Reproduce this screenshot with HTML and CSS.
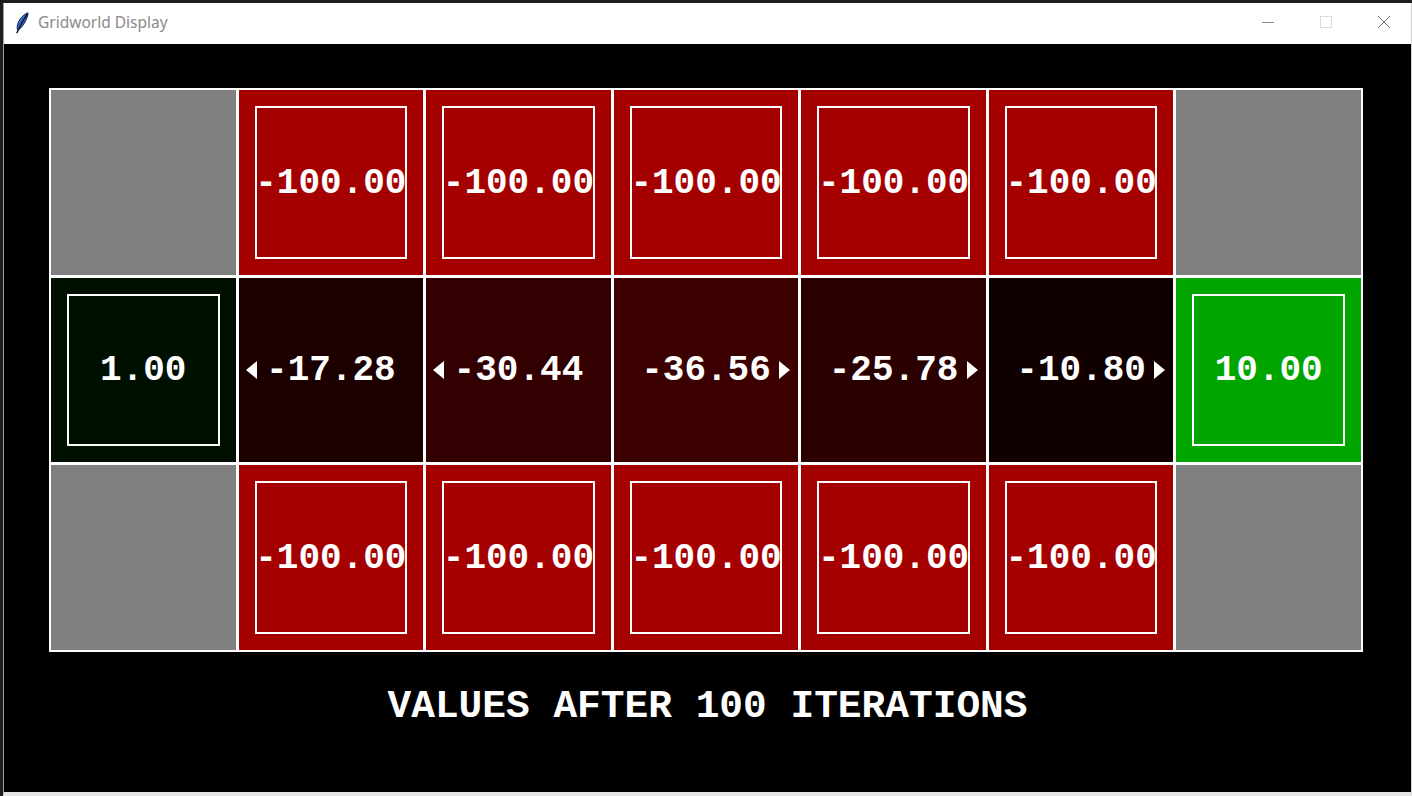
FILE: index.html
```html
<!DOCTYPE html>
<html>
<head>
<meta charset="utf-8">
<link rel="stylesheet" href="styles.css">
</head>
<body>
<div class="window">
  <div class="titlebar">
    <svg class="app-icon" width="16" height="22" viewBox="0 0 16 22">
      <path d="M14 0.8 C9 2.5 4.3 8 3.3 14 C3 16 3.2 17.6 3.9 18.3 C6.5 17 9.5 13 11.5 9 C13 6 14 3.5 14 0.8 Z" fill="#3a6fd0" stroke="#102250" stroke-width="1"/>
      <path d="M13 2.5 C9.5 8 6.2 13 3 20.8" fill="none" stroke="#0a1330" stroke-width="1.4" stroke-linecap="round"/>
    </svg>
    <span class="title">Gridworld Display</span>
    <div class="controls">
      <svg class="ctl" width="46" height="30" viewBox="0 0 46 30"><line x1="17" y1="15.5" x2="29" y2="15.5" stroke="#8a8a8a" stroke-width="1"/></svg>
      <svg class="ctl" width="46" height="30" viewBox="0 0 46 30"><rect x="17.5" y="9.5" width="11" height="11" fill="none" stroke="#dcdcdc" stroke-width="1"/></svg>
      <svg class="ctl" width="46" height="30" viewBox="0 0 46 30"><path d="M17 9 L29 21 M29 9 L17 21" stroke="#7a7a7a" stroke-width="1"/></svg>
    </div>
  </div>
  <div class="canvas">
    <div class="grid">
      <div class="cell wall"></div>
      <div class="cell term pit"><div class="box"><span class="val">-100.00</span></div></div>
      <div class="cell term pit"><div class="box"><span class="val">-100.00</span></div></div>
      <div class="cell term pit"><div class="box"><span class="val">-100.00</span></div></div>
      <div class="cell term pit"><div class="box"><span class="val">-100.00</span></div></div>
      <div class="cell term pit"><div class="box"><span class="val">-100.00</span></div></div>
      <div class="cell wall"></div>

      <div class="cell term small"><div class="box"><span class="val">1.00</span></div></div>
      <div class="cell plain c1"><span class="arrow left"></span><span class="val">-17.28</span></div>
      <div class="cell plain c2"><span class="arrow left"></span><span class="val">-30.44</span></div>
      <div class="cell plain c3"><span class="val">-36.56</span><span class="arrow right"></span></div>
      <div class="cell plain c4"><span class="val">-25.78</span><span class="arrow right"></span></div>
      <div class="cell plain c5"><span class="val">-10.80</span><span class="arrow right"></span></div>
      <div class="cell term big"><div class="box"><span class="val">10.00</span></div></div>

      <div class="cell wall"></div>
      <div class="cell term pit"><div class="box"><span class="val">-100.00</span></div></div>
      <div class="cell term pit"><div class="box"><span class="val">-100.00</span></div></div>
      <div class="cell term pit"><div class="box"><span class="val">-100.00</span></div></div>
      <div class="cell term pit"><div class="box"><span class="val">-100.00</span></div></div>
      <div class="cell term pit"><div class="box"><span class="val">-100.00</span></div></div>
      <div class="cell wall"></div>
    </div>
    <div class="caption">VALUES AFTER 100 ITERATIONS</div>
  </div>
</div>
</body>
</html>
```

FILE: styles.css
```css
html, body {
  margin: 0;
  padding: 0;
  width: 1412px;
  height: 796px;
  overflow: hidden;
  background: #1e1e1e;
}
.window {
  margin: 3px 0 0 3px;
  width: 1409px;
  height: 793px;
  background: #ffffff;
  display: flex;
  flex-direction: column;
  box-sizing: border-box;
  border-left: 1px solid #a0a0a0;
  border-right: 1px solid #d0d0d0;
  border-bottom: 4px solid #e6e6e6;
}
.titlebar {
  height: 41px;
  flex: none;
  display: flex;
  align-items: center;
  background: #ffffff;
}
.app-icon {
  margin-left: 10px;
  margin-top: -1px;
}
.title {
  margin-left: 8px;
  font-family: "Noto Sans", "Open Sans", sans-serif;
  font-size: 15.5px;
  color: #8a8a8a;
  margin-top: -3px;
}
.controls {
  margin-left: auto;
  display: flex;
  align-items: center;
  margin-right: 4px;
  margin-top: -4px;
}
.ctl {
  display: block;
  margin-left: 12px;
}
.canvas {
  flex: 1;
  background: #000000;
  display: flex;
  flex-direction: column;
  align-items: flex-start;
  padding-top: 44px;
  padding-left: 45px;
}
.grid {
  width: 1314px;
  height: 564px;
  box-sizing: border-box;
  padding: 2px;
  background: #ffffff;
  display: grid;
  grid-template-columns: repeat(7, minmax(0, 1fr));
  grid-template-rows: repeat(3, minmax(0, 1fr));
  gap: 3px;
}
.cell {
  position: relative;
  min-width: 0;
  display: flex;
  align-items: center;
  justify-content: center;
  box-sizing: border-box;
  font-family: "Liberation Mono", "DejaVu Sans Mono", monospace;
  font-weight: bold;
  font-size: 36px;
  color: #ffffff;
}
.wall { background: #7f7f7f; }
.pit { background: #a50000; }
.small { background: #001000; }
.big { background: #00a500; }
.c1 { background: #1c0000; }
.c2 { background: #320000; }
.c3 { background: #3c0000; }
.c4 { background: #2a0000; }
.c5 { background: #110000; }
.term { padding: 16px; }
.box {
  width: 100%;
  height: 100%;
  min-width: 0;
  box-sizing: border-box;
  border: 2px solid #ffffff;
  display: flex;
  align-items: center;
  justify-content: center;
}
.val {
  white-space: nowrap;
  line-height: 1;
  margin-top: 3px;
}
.arrow {
  position: absolute;
  top: 50%;
  width: 0;
  height: 0;
  margin-top: -9px;
  border-top: 9px solid transparent;
  border-bottom: 9px solid transparent;
}
.arrow.left {
  left: 7px;
  border-right: 11px solid #ffffff;
}
.arrow.right {
  right: 8px;
  border-left: 11px solid #ffffff;
}
.caption {
  align-self: center;
  margin-top: 35px;
  margin-left: -45px;
  font-family: "Liberation Mono", "DejaVu Sans Mono", monospace;
  font-weight: bold;
  font-size: 39.5px;
  line-height: 40px;
  color: #ffffff;
  white-space: nowrap;
}
```
